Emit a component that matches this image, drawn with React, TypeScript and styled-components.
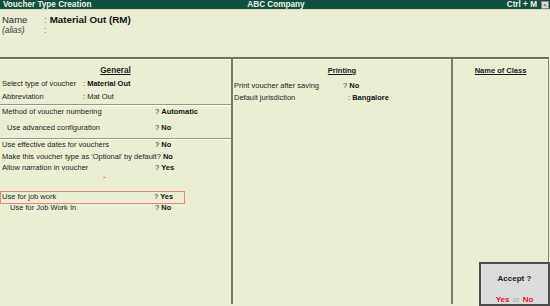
import React from "react";
import styled, { createGlobalStyle } from "styled-components";

const Global = createGlobalStyle`
  html, body { margin: 0; padding: 0; background: #eceed4; }
  #root { width: 550px; height: 306px; }
`;

const Screen = styled.div`
  position: relative;
  width: 550px;
  height: 306px;
  overflow: hidden;
  display: flex;
  flex-direction: column;
  background: #eceed4;
  font-family: "Liberation Sans", Arial, sans-serif;
  color: #1e1e1e;
`;

const TitleBar = styled.div`
  height: 9px;
  flex-shrink: 0;
  display: grid;
  grid-template-columns: 1fr auto 1fr;
  align-items: center;
  padding: 0 1px 0 3px;
  background: #0f4f40;
  border-bottom: 1px solid #d3d8c2;
  color: #f3f3e6;
  font-size: 8.2px;
  font-weight: bold;
  line-height: 9px;
  white-space: nowrap;
`;

const TitleRight = styled.div`
  display: flex;
  justify-content: flex-end;
  align-items: center;
  gap: 4px;
`;

const CloseBox = styled.div`
  width: 6px;
  height: 6px;
  border: 1px solid #8a8a8a;
  background: #dcdcd4;
  color: #444;
  font-size: 6px;
  line-height: 6px;
  text-align: center;
  font-weight: normal;
`;

const Header = styled.div`
  height: 47px;
  flex-shrink: 0;
  box-sizing: border-box;
  padding: 4px 0 0 2px;
`;

const HeaderRow = styled.div<{ $italic?: boolean }>`
  display: flex;
  font-size: ${(p) => (p.$italic ? "8.3px" : "9.5px")};
  line-height: ${(p) => (p.$italic ? "10px" : "11px")};
  font-style: ${(p) => (p.$italic ? "italic" : "normal")};
  color: ${(p) => (p.$italic ? "#3a3a3a" : "#2a2a2a")};
`;

const HeaderLabel = styled.span`
  width: 42px;
  flex-shrink: 0;
`;

const HeaderColon = styled.span`
  color: #777;
  font-style: normal;
  margin-right: 3px;
`;

const HeaderValue = styled.span`
  font-weight: bold;
  color: #111;
  font-size: 9.8px;
`;

const Body = styled.div`
  flex: 1;
  display: grid;
  grid-template-columns: 233px 220px 1fr;
  margin-right: 1px;
  padding-bottom: 2px;
  border-top: 2px solid #727264;
  border-right: 1px solid #8a8a7a;
  box-shadow: inset 0 1px 0 #fbfbf0;
`;

const Column = styled.div<{ $divider?: boolean }>`
  display: flex;
  flex-direction: column;
  border-right: ${(p) => (p.$divider ? "2px solid #7b7b6b" : "none")};
  min-width: 0;
`;

const Heading = styled.div<{ $size: number }>`
  margin-top: 6px;
  line-height: 12px;
  text-align: center;
  font-size: ${(p) => p.$size}px;
  font-weight: bold;
  text-decoration: underline;
  color: #1a1a1a;
`;

const Section = styled.div<{ $pt: number; $pb: number; $line?: boolean }>`
  padding-top: ${(p) => p.$pt}px;
  padding-bottom: ${(p) => p.$pb}px;
  border-bottom: ${(p) => (p.$line ? "1px solid #979787" : "none")};
  box-shadow: ${(p) => (p.$line ? "0 1px 0 #fbfbf2" : "none")};
`;

const Row = styled.div<{ $indent: number; $h: number; $mt?: number }>`
  display: flex;
  white-space: nowrap;
  padding-left: ${(p) => p.$indent}px;
  margin-top: ${(p) => p.$mt ?? 0}px;
  font-size: 7.5px;
  line-height: ${(p) => p.$h}px;
`;

const HighlightRow = styled(Row)`
  width: 185px;
  box-sizing: border-box;
  padding-left: 1px;
  border: 1px solid #e4897b;
`;

const Label = styled.span<{ $w: number }>`
  min-width: ${(p) => p.$w}px;
  flex-shrink: 0;
  color: #242424;
`;

const Value = styled.span`
  color: #222;
`;

const Strong = styled.b`
  font-weight: bold;
  color: #111;
`;

const Mark = styled.div`
  padding-left: 103px;
  font-size: 8px;
  line-height: 11.5px;
  color: #5a5a52;
`;

const AcceptBox = styled.div`
  position: absolute;
  right: 0;
  bottom: 0;
  width: 71px;
  height: 44px;
  box-sizing: border-box;
  border: 2px solid #4c4c4c;
  background: #dcdcdc;
  display: flex;
  flex-direction: column;
  align-items: center;
  padding-top: 10px;
  gap: 11px;
  font-size: 8px;
  line-height: 10px;
`;

const AcceptTitle = styled.div`
  font-weight: bold;
  color: #1a1a1a;
`;

const Choices = styled.div`
  display: flex;
  gap: 3px;
`;

const Choice = styled.span<{ $primary?: boolean }>`
  color: ${(p) => (p.$primary ? "#e8141c" : "#a8a8a8")};
  font-weight: ${(p) => (p.$primary ? "bold" : "normal")};
`;

type QRow = { label: string; value: string; indent: number };

export default function App() {
  const section3: QRow[] = [
    { label: "Use effective dates for vouchers", value: "No", indent: 2 },
    { label: "Make this voucher type as 'Optional' by default", value: "No", indent: 2 },
    { label: "Allow narration in voucher", value: "Yes", indent: 2 },
  ];

  return (
    <Screen>
      <Global />
      <TitleBar>
        <span>Voucher Type Creation</span>
        <span>ABC Company</span>
        <TitleRight>
          <span>Ctrl + M</span>
          <CloseBox>×</CloseBox>
        </TitleRight>
      </TitleBar>

      <Header>
        <HeaderRow>
          <HeaderLabel>Name</HeaderLabel>
          <HeaderColon>:</HeaderColon>
          <HeaderValue>Material Out (RM)</HeaderValue>
        </HeaderRow>
        <HeaderRow $italic>
          <HeaderLabel>(alias)</HeaderLabel>
          <HeaderColon>:</HeaderColon>
        </HeaderRow>
      </Header>

      <Body>
        <Column $divider>
          <Heading $size={8.2}>General</Heading>
          <Section $pt={0} $pb={1} $line>
            <Row $indent={2} $h={13}>
              <Label $w={81}>Select type of voucher</Label>
              <Value>
                : <Strong>Material Out</Strong>
              </Value>
            </Row>
            <Row $indent={2} $h={13}>
              <Label $w={81}>Abbreviation</Label>
              <Value>: Mat Out</Value>
            </Row>
          </Section>
          <Section $pt={1} $pb={4} $line>
            <Row $indent={2} $h={12}>
              <Label $w={153}>Method of voucher numbering</Label>
              <Value>
                ? <Strong>Automatic</Strong>
              </Value>
            </Row>
            <Row $indent={7} $h={12} $mt={4}>
              <Label $w={148}>Use advanced configuration</Label>
              <Value>
                ? <Strong>No</Strong>
              </Value>
            </Row>
          </Section>
          <Section $pt={0} $pb={0}>
            {section3.map((r) => (
              <Row key={r.label} $indent={r.indent} $h={11.5}>
                <Label $w={155 - r.indent}>{r.label}</Label>
                <Value>
                  ? <Strong>{r.value}</Strong>
                </Value>
              </Row>
            ))}
            <Mark>ˇ</Mark>
            <HighlightRow $indent={1} $h={10.5} $mt={6}>
              <Label $w={152}>Use for job work</Label>
              <Value>
                ? <Strong>Yes</Strong>
              </Value>
            </HighlightRow>
            <Row $indent={10} $h={8}>
              <Label $w={145}>Use for Job Work In</Label>
              <Value>
                ? <Strong>No</Strong>
              </Value>
            </Row>
          </Section>
        </Column>

        <Column $divider>
          <Heading $size={7.5}>Printing</Heading>
          <Row $indent={1} $h={11.5} $mt={3}>
            <Label $w={109}>Print voucher after saving</Label>
            <Value>
              ? <Strong>No</Strong>
            </Value>
          </Row>
          <Row $indent={1} $h={11.5}>
            <Label $w={114}>Default jurisdiction</Label>
            <Value>
              : <Strong>Bangalore</Strong>
            </Value>
          </Row>
        </Column>

        <Column>
          <Heading $size={7.5}>Name of Class</Heading>
        </Column>
      </Body>

      <AcceptBox>
        <AcceptTitle>Accept ?</AcceptTitle>
        <Choices>
          <Choice $primary>Yes</Choice>
          <Choice>or</Choice>
          <Choice $primary>No</Choice>
        </Choices>
      </AcceptBox>
    </Screen>
  );
}
